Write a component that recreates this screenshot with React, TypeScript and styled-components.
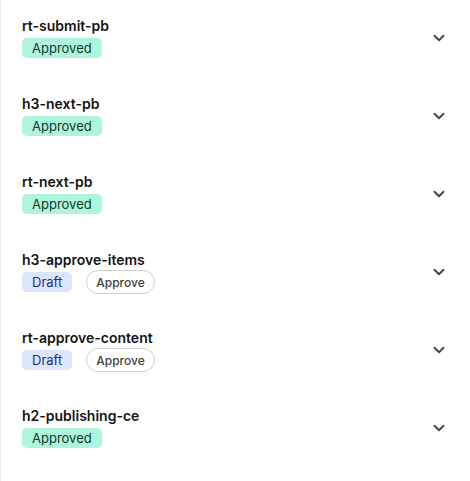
import React from 'react';
import styled, { createGlobalStyle } from 'styled-components';
import { ChevronDown } from 'lucide-react';

const GlobalStyle = createGlobalStyle`
    html, body {
        margin: 0;
        padding: 0;
        background: #ffffff;
    }
    body {
        font-family: Inter, "Noto Sans", "Liberation Sans", sans-serif;
        color: #111111;
    }
`;

const Panel = styled.div`
    width: 470px;
    min-height: 481px;
    box-sizing: border-box;
    border-left: 1px solid #ececec;
    display: flex;
    flex-direction: column;
`;

const Row = styled.div`
    display: flex;
    align-items: center;
    justify-content: space-between;
    padding: 16px 22px 18px 21px;
`;

const Info = styled.div`
    display: flex;
    flex-direction: column;
`;

const Name = styled.div`
    font-size: 14px;
    font-weight: 600;
    line-height: 20px;
    color: #141414;
`;

const Tags = styled.div`
    display: flex;
    align-items: center;
    gap: 14px;
    height: 24px;
`;

const Badge = styled.span<{ $tone: 'approved' | 'draft' }>`
    display: inline-flex;
    align-items: center;
    height: 20px;
    padding: 0 10px;
    border-radius: 5px;
    font-size: 13px;
    line-height: 20px;
    background: ${(p) => (p.$tone === 'approved' ? '#aff4dd' : '#dbe6fe')};
    color: ${(p) => (p.$tone === 'approved' ? '#0e3b2c' : '#1d2f7a')};
`;

const ApproveBtn = styled.button`
    height: 24px;
    padding: 0 9px;
    border: 1px solid #cfcfcf;
    border-radius: 12px;
    background: #ffffff;
    font-family: inherit;
    font-size: 12px;
    font-weight: 500;
    color: #404040;
    cursor: pointer;
`;

const Toggle = styled.span`
    display: flex;
    color: #444444;
`;

type Item = { name: string; status: 'approved' | 'draft' };

const items: Item[] = [
    { name: 'rt-submit-pb', status: 'approved' },
    { name: 'h3-next-pb', status: 'approved' },
    { name: 'rt-next-pb', status: 'approved' },
    { name: 'h3-approve-items', status: 'draft' },
    { name: 'rt-approve-content', status: 'draft' },
    { name: 'h2-publishing-ce', status: 'approved' },
];

const App: React.FC = () => {
    return (
        <>
            <GlobalStyle />
            <Panel>
                {items.map((item) => (
                    <Row key={item.name}>
                        <Info>
                            <Name>{item.name}</Name>
                            <Tags>
                                <Badge $tone={item.status}>
                                    {item.status === 'approved' ? 'Approved' : 'Draft'}
                                </Badge>
                                {item.status === 'draft' && <ApproveBtn>Approve</ApproveBtn>}
                            </Tags>
                        </Info>
                        <Toggle>
                            <ChevronDown size={18} strokeWidth={2.5} />
                        </Toggle>
                    </Row>
                ))}
            </Panel>
        </>
    );
};

export default App;
